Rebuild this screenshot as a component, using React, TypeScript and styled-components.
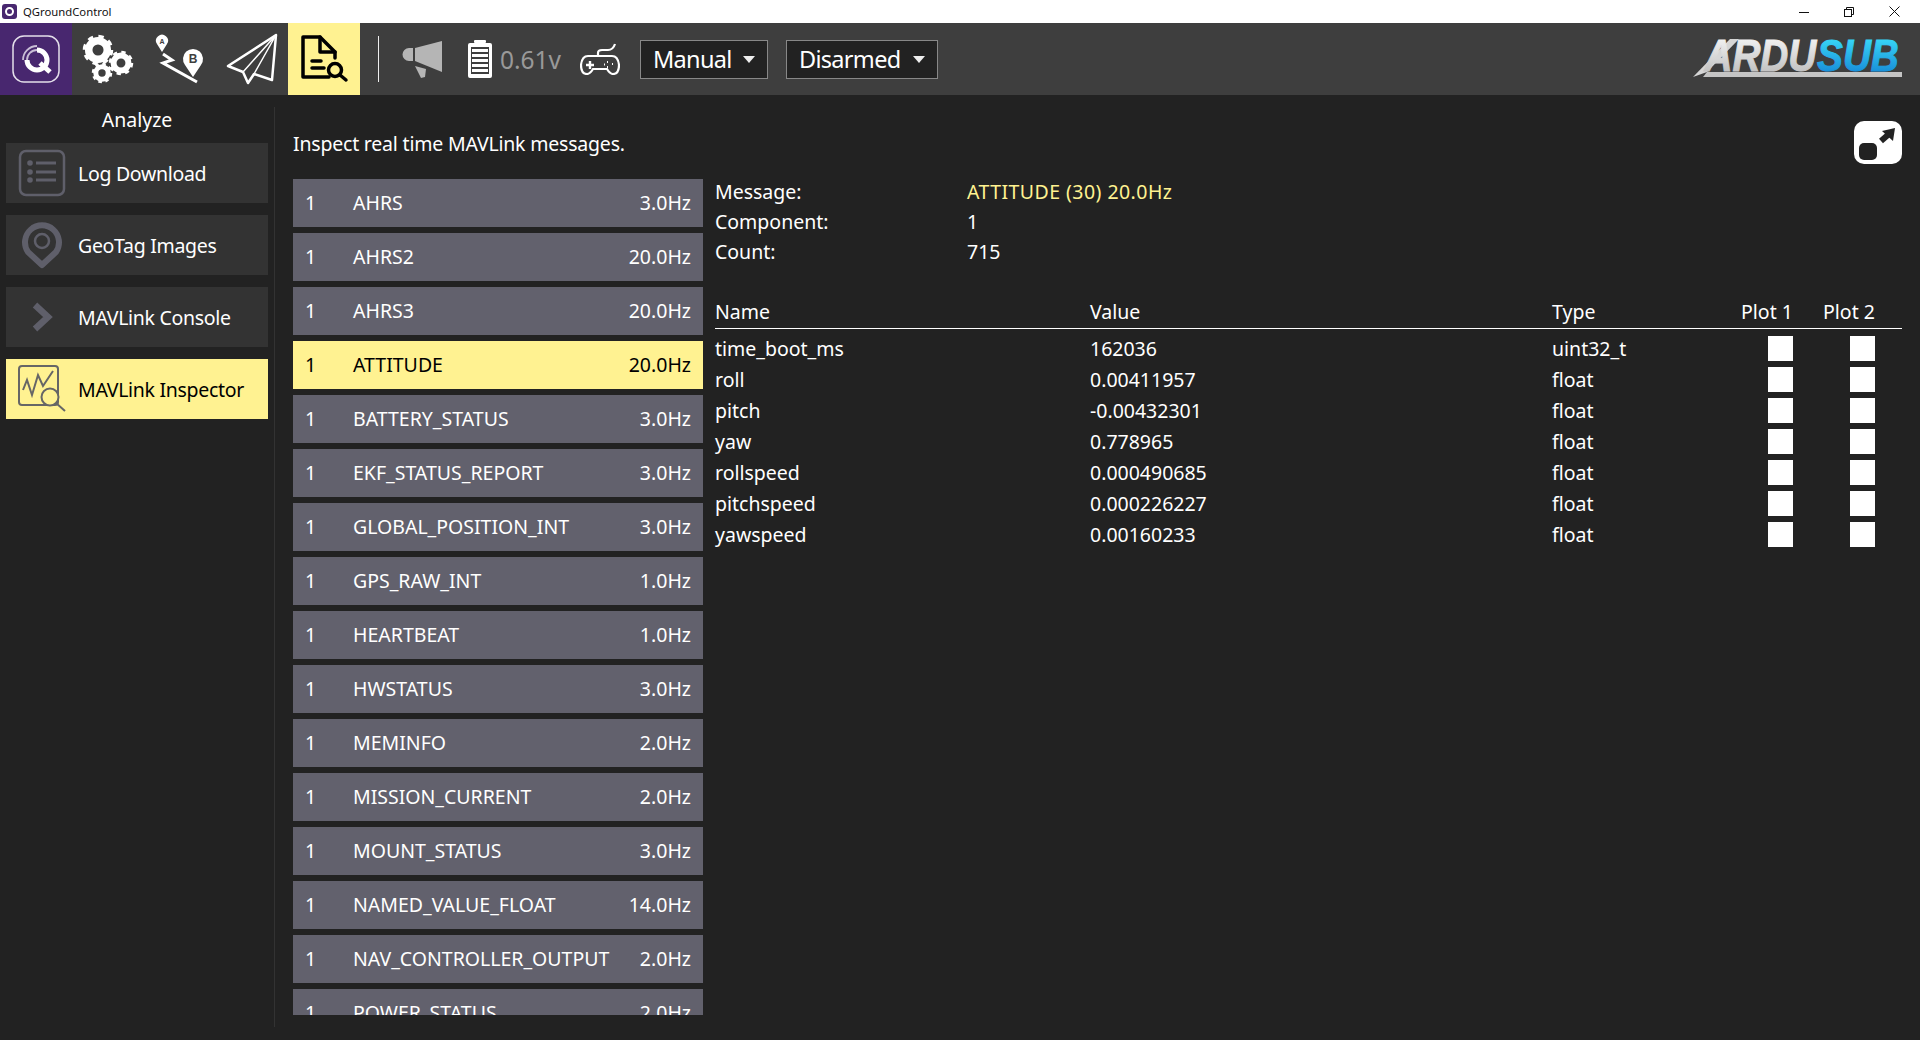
import React, { FC } from 'react'
import styled, { createGlobalStyle } from 'styled-components'

const Global = createGlobalStyle`
  html, body { margin: 0; height: 100%; background: #222; }
  body { font-family: "Noto Sans", "Open Sans", "Liberation Sans", sans-serif; font-size: 19.5px; color: #fff; overflow: hidden; }
  * { box-sizing: border-box; }
`

const Window = styled.div`
  display: flex;
  flex-direction: column;
  height: 100vh;
`

const TitleBar = styled.div`
  display: flex;
  align-items: center;
  flex: 0 0 23px;
  background: #fff;
  color: #111;
  font-size: 11.3px;
  padding-left: 2px;
`

const TitleText = styled.span`
  margin-left: 6px;
`

const WindowControls = styled.div`
  display: flex;
  align-items: center;
  margin-left: auto;
  padding-right: 20px;
  gap: 35px;
`

const Toolbar = styled.div`
  display: flex;
  align-items: center;
  flex: 0 0 72px;
  background: #3e3e3e;
`

const ToolButton = styled.div<{ $bg?: string }>`
  flex: 0 0 72px;
  height: 72px;
  background: ${(p) => p.$bg || 'transparent'};
  svg { display: block; }
`

const ToolDivider = styled.div`
  width: 1px;
  height: 46px;
  margin: 0 21px 0 18px;
  background: #eee;
`

const Voltage = styled.span`
  margin: 0 17px 0 8px;
  color: #999;
  font-size: 24.5px;
  width: 63px;
  white-space: nowrap;
`

const Battery = styled.svg`
  margin-left: 24px;
`

const Dropdown = styled.div<{ $width: number }>`
  display: flex;
  align-items: center;
  justify-content: space-between;
  width: ${(p) => p.$width}px;
  height: 39px;
  margin-left: ${(p) => (p.$width > 130 ? 18 : 20)}px;
  padding: 0 12px;
  background: #222;
  border: 1px solid #888;
  font-size: 23.5px;
  letter-spacing: -0.7px;
`

const Caret = styled.span`
  width: 0;
  height: 0;
  border-left: 6px solid transparent;
  border-right: 6px solid transparent;
  border-top: 7px solid #eee;
`

const Logo = styled.svg`
  margin-left: auto;
  margin-right: 18px;
`

const Body = styled.div`
  display: flex;
  flex: 1;
  min-height: 0;
`

const Sidebar = styled.div`
  display: flex;
  flex-direction: column;
  flex: 0 0 268px;
  padding-left: 6px;
  gap: 12px;
`

const SideTitle = styled.div`
  height: 36px;
  margin-top: 12px;
  text-align: center;
  line-height: 26px;
  margin-bottom: -12px;
`

const SideButton = styled.div<{ $active?: boolean }>`
  display: flex;
  align-items: center;
  height: 60px;
  background: ${(p) => (p.$active ? '#fff291' : '#333')};
  color: ${(p) => (p.$active ? '#000' : '#fff')};
  letter-spacing: -0.3px;
`

const SideIcon = styled.div`
  display: flex;
  justify-content: center;
  flex: 0 0 72px;
`

const VLine = styled.div`
  flex: 0 0 1px;
  margin: 12px 0 13px 6px;
  background: #333;
`

const Main = styled.div`
  display: flex;
  flex: 1;
  flex-direction: column;
  min-width: 0;
  padding: 26px 18px 25px 18px;
`

const Header = styled.div`
  display: flex;
  align-items: center;
  justify-content: space-between;
  flex: 0 0 43px;
  margin-bottom: 13px;
`

const HeaderText = styled.span`
  margin-top: 2px;
  letter-spacing: -0.2px;
`

const ExpandButton = styled.div`
  width: 48px;
  height: 43px;
  background: #fff;
  border-radius: 10px;
  svg { display: block; }
`

const Content = styled.div`
  display: flex;
  flex: 1;
  min-height: 0;
`

const MessageList = styled.div`
  display: flex;
  flex-direction: column;
  flex: 0 0 410px;
  gap: 6px;
  margin-top: 2px;
  overflow: hidden;
`

const MessageRow = styled.div<{ $active?: boolean }>`
  display: flex;
  align-items: center;
  flex: 0 0 48px;
  padding: 0 12px 1px;
  background: ${(p) => (p.$active ? '#fff291' : '#62616d')};
  color: ${(p) => (p.$active ? '#000' : '#fff')};
`

const CompId = styled.span`
  flex: 0 0 48px;
`

const MessageName = styled.span`
  flex: 1;
`

const Detail = styled.div`
  flex: 1;
  margin: -1px 0 0 12px;
`

const InfoGrid = styled.div`
  display: grid;
  grid-template-columns: 252px 1fr;
  grid-auto-rows: 30px;
  align-items: center;
`

const Highlight = styled.span`
  color: #fff291;
  letter-spacing: 0.45px;
`

const FieldGrid = styled.div`
  display: grid;
  grid-template-columns: 375px 462px 189px 82px 79px;
  margin-top: 30px;
`

const HeadRow = styled.div`
  display: grid;
  grid-template-columns: subgrid;
  grid-column: 1 / -1;
  align-items: center;
  height: 33px;
  padding-bottom: 2px;
  border-bottom: 1px solid #fff;
  margin-bottom: 6px;
`

const FieldRow = styled.div`
  display: grid;
  grid-template-columns: subgrid;
  grid-column: 1 / -1;
  align-items: center;
  height: 25px;
  margin-bottom: 6px;
`

const PlotBox = styled.div`
  width: 25px;
  height: 25px;
  margin-left: 27px;
  background: #fff;
`

const messages: [string, string][] = [
  ['AHRS', '3.0Hz'],
  ['AHRS2', '20.0Hz'],
  ['AHRS3', '20.0Hz'],
  ['ATTITUDE', '20.0Hz'],
  ['BATTERY_STATUS', '3.0Hz'],
  ['EKF_STATUS_REPORT', '3.0Hz'],
  ['GLOBAL_POSITION_INT', '3.0Hz'],
  ['GPS_RAW_INT', '1.0Hz'],
  ['HEARTBEAT', '1.0Hz'],
  ['HWSTATUS', '3.0Hz'],
  ['MEMINFO', '2.0Hz'],
  ['MISSION_CURRENT', '2.0Hz'],
  ['MOUNT_STATUS', '3.0Hz'],
  ['NAMED_VALUE_FLOAT', '14.0Hz'],
  ['NAV_CONTROLLER_OUTPUT', '2.0Hz'],
  ['POWER_STATUS', '2.0Hz'],
]

const fields: [string, string, string][] = [
  ['time_boot_ms', '162036', 'uint32_t'],
  ['roll', '0.00411957', 'float'],
  ['pitch', '-0.00432301', 'float'],
  ['yaw', '0.778965', 'float'],
  ['rollspeed', '0.000490685', 'float'],
  ['pitchspeed', '0.000226227', 'float'],
  ['yawspeed', '0.00160233', 'float'],
]

const Gear: FC<{ cx: number; cy: number; r: number }> = ({ cx, cy, r }) => {
  const teeth = 8
  const circ = 2 * Math.PI * (r - 2)
  return (
    <g fill="none" stroke="#fff">
      <circle cx={cx} cy={cy} r={r * 0.62} strokeWidth={r * 0.5} />
      <circle cx={cx} cy={cy} r={r - 2} strokeWidth={4.5} strokeDasharray={`${circ / teeth / 2} ${circ / teeth / 2}`} />
    </g>
  )
}

const QgcIcon = () => (
  <svg width="72" height="72" viewBox="0 0 72 72" fill="none">
    <rect x="13" y="13" width="46" height="46" rx="11" stroke="#e4dfea" strokeWidth="1.5" />
    <path d="M37 27 A10 10 0 1 1 27 37" stroke="#fff" strokeWidth="5" />
    <path d="M40 40 L50 49" stroke="#fff" strokeWidth="5" />
    <path d="M23 37 A14 14 0 0 1 37 23" stroke="#c9bed6" strokeWidth="1.8" />
    <path d="M27 37 A10 10 0 0 1 37 27" stroke="#c9bed6" strokeWidth="1.8" />
  </svg>
)

const GearsIcon = () => (
  <svg width="72" height="72" viewBox="0 0 72 72">
    <Gear cx={26} cy={27} r={15} />
    <Gear cx={49} cy={40} r={12} />
    <Gear cx={30} cy={50} r={10} />
  </svg>
)

const RouteIcon = () => (
  <svg width="72" height="72" viewBox="0 0 72 72">
    <path d="M18 29 L13 21 A6 6 0 1 1 23 21 Z" fill="#fff" />
    <text x="18" y="21" textAnchor="middle" fontSize="7" fontWeight="700" fill="#3e3e3e" fontFamily="Liberation Sans, sans-serif">A</text>
    <path d="M19 31 L28 37 L19 40 L53 59" fill="none" stroke="#fff" strokeWidth="3" />
    <path d="M49 54 L41 42 A10 10 0 1 1 57 42 Z" fill="#fff" />
    <text x="49" y="40" textAnchor="middle" fontSize="12" fontWeight="700" fill="#3e3e3e" fontFamily="Liberation Sans, sans-serif">B</text>
  </svg>
)

const PlaneIcon = () => (
  <svg width="72" height="72" viewBox="0 0 72 72" fill="none" stroke="#fff" strokeWidth="2.5" strokeLinejoin="round">
    <path d="M60 12 L12 43 L27 49 L32 60 L38 51 L56 57 Z" />
    <path d="M60 12 L27 49 M60 12 L38 51" strokeWidth="1.5" />
  </svg>
)

const AnalyzeIcon = () => (
  <svg width="72" height="72" viewBox="0 0 72 72" fill="none" stroke="#000" strokeWidth="3.5" strokeLinejoin="round" strokeLinecap="round">
    <path d="M41 54 H15 V14 H32 L47 29 V35" />
    <path d="M32 14 V29 H47" />
    <path d="M24 38 H33 M24 45 H36" />
    <circle cx="47" cy="47" r="6.5" />
    <path d="M52 52 L58 57" />
  </svg>
)

const MegaphoneIcon = () => (
  <svg width="44" height="44" viewBox="0 0 44 44" fill="#b5b5b5">
    <path d="M9 11 A6.5 6.5 0 0 0 9 24 H13 V11 Z" />
    <path d="M15 11 L42 4 V35 L15 24 Z" />
    <path d="M15 29 L26 32 L25 40 L21 41 Z" />
  </svg>
)

const BatteryIcon = () => (
  <Battery width="24" height="38" viewBox="0 0 24 38" fill="#fff">
    <rect x="6" y="0" width="12" height="3" rx="1" />
    <path fillRule="evenodd" d="M2 3 H22 Q24 3 24 5 V36 Q24 38 22 38 H2 Q0 38 0 36 V5 Q0 3 2 3 Z M3 7 V34 H21 V7 Z" />
    <rect x="4" y="9" width="16" height="3" />
    <rect x="4" y="14" width="16" height="3" />
    <rect x="4" y="19" width="16" height="3" />
    <rect x="4" y="24" width="16" height="3" />
    <rect x="4" y="29" width="16" height="3" />
  </Battery>
)

const JoystickIcon = () => (
  <svg width="40" height="32" viewBox="0 0 40 32" fill="none" stroke="#fff" strokeWidth="2.2">
    <path d="M8 13 H32 Q38 13 39 22 Q39 31 33 31 Q30 31 27 26 H13 Q10 31 7 31 Q1 31 1 22 Q2 13 8 13 Z" />
    <path d="M18 13 V10 Q18 7 22 7 H28 Q33 7 35 1" />
    <path d="M6 22 H14 M10 18 V26" strokeWidth="2.4" />
    <path d="M27 19 H28 M32 21 H33 M27 24 H28 M24 21.5 H25" strokeWidth="2" />
  </svg>
)

const ArduSubLogo = () => (
  <Logo width="209" height="56" viewBox="0 0 209 56">
    <defs>
      <linearGradient id="ardu" x1="0" y1="0" x2="0" y2="1">
        <stop offset="0.15" stopColor="#f2f2f2" />
        <stop offset="0.8" stopColor="#c4c4c4" />
      </linearGradient>
      <linearGradient id="sub" x1="0" y1="0" x2="0" y2="1">
        <stop offset="0.15" stopColor="#38d8f8" />
        <stop offset="0.8" stopColor="#1a92da" />
      </linearGradient>
    </defs>
    <path d="M0 46 L37 8 H46 L14 41 Z" fill="#d6d6d6" />
    <path d="M14 41 H209 V46 H10 Z" fill="#c4c4c4" />
    <g transform="scale(0.88 1)" fontFamily="Liberation Sans, sans-serif" fontWeight="700" fontStyle="italic" fontSize="44" strokeWidth="1">
      <text x="13" y="40" fill="url(#ardu)" stroke="url(#ardu)">ARDU</text>
      <text x="141" y="40" fill="url(#sub)" stroke="url(#sub)">SUB</text>
    </g>
  </Logo>
)

const LogDownloadIcon = () => (
  <svg width="48" height="48" viewBox="0 0 48 48" fill="none" stroke="#5f5f6a" strokeWidth="2.5">
    <rect x="2" y="2" width="44" height="44" rx="6" />
    <path d="M18 14 H38 M18 23 H38 M18 31 H38" strokeWidth="3" />
    <g fill="#5f5f6a" stroke="none">
      <circle cx="12" cy="14" r="2.8" />
      <circle cx="12" cy="23" r="2.8" />
      <circle cx="12" cy="31" r="2.8" />
    </g>
  </svg>
)

const GeoTagIcon = () => (
  <svg width="48" height="48" viewBox="0 0 48 48" fill="none" stroke="#5f5f6a">
    <path d="M24 44 L10 31 A17 17 0 1 1 38 31 Z" strokeWidth="6" strokeLinejoin="round" />
    <circle cx="24" cy="20" r="7" strokeWidth="2.5" />
  </svg>
)

const ConsoleIcon = () => (
  <svg width="48" height="48" viewBox="0 0 48 48" fill="none" stroke="#5f5f6a">
    <path d="M17 12 L30 24 L17 36" strokeWidth="6.5" />
  </svg>
)

const InspectorIcon = () => (
  <svg width="48" height="48" viewBox="0 0 48 48" fill="none" stroke="#666">
    <rect x="1" y="1" width="39" height="39" rx="3" strokeWidth="2" />
    <path d="M5 25 L9 15 L14 30 L20 10 L25 21 L35 6" strokeWidth="2" />
    <circle cx="32" cy="32" r="8.5" strokeWidth="2" fill="#fff291" />
    <path d="M38 38 L47 46" strokeWidth="2" />
  </svg>
)

const ExpandIcon = () => (
  <svg width="48" height="43" viewBox="0 0 48 43" fill="#222">
    <rect x="5" y="22" width="18" height="17" rx="5" />
    <path d="M41 7 L28 10 L39 20 Z" />
    <path d="M27 20 L35 13" stroke="#222" strokeWidth="6" />
  </svg>
)

const App: FC = () => (
  <Window>
    <Global />
    <TitleBar>
      <svg width="15" height="15" viewBox="0 0 15 15">
        <rect width="15" height="15" rx="3" fill="#48276f" />
        <circle cx="7.5" cy="7.5" r="3.5" fill="none" stroke="#fff" strokeWidth="2" />
      </svg>
      <TitleText>QGroundControl</TitleText>
      <WindowControls>
        <svg width="10" height="10" viewBox="0 0 10 10" stroke="#111"><path d="M0 5.5 H10" /></svg>
        <svg width="10" height="10" viewBox="0 0 10 10" fill="none" stroke="#111"><rect x="0.5" y="2.5" width="7" height="7" /><path d="M2.5 2.5 V0.5 H9.5 V7.5 H7.5" /></svg>
        <svg width="11" height="11" viewBox="0 0 11 11" stroke="#111"><path d="M0.5 0.5 L10.5 10.5 M10.5 0.5 L0.5 10.5" /></svg>
      </WindowControls>
    </TitleBar>
    <Toolbar>
      <ToolButton $bg="#48276f"><QgcIcon /></ToolButton>
      <ToolButton><GearsIcon /></ToolButton>
      <ToolButton><RouteIcon /></ToolButton>
      <ToolButton><PlaneIcon /></ToolButton>
      <ToolButton $bg="#fff291"><AnalyzeIcon /></ToolButton>
      <ToolDivider />
      <MegaphoneIcon />
      <BatteryIcon />
      <Voltage>0.61v</Voltage>
      <JoystickIcon />
      <Dropdown $width={128}>Manual<Caret /></Dropdown>
      <Dropdown $width={152}>Disarmed<Caret /></Dropdown>
      <ArduSubLogo />
    </Toolbar>
    <Body>
      <Sidebar>
        <SideTitle>Analyze</SideTitle>
        <SideButton><SideIcon><LogDownloadIcon /></SideIcon>Log Download</SideButton>
        <SideButton><SideIcon><GeoTagIcon /></SideIcon>GeoTag Images</SideButton>
        <SideButton><SideIcon><ConsoleIcon /></SideIcon>MAVLink Console</SideButton>
        <SideButton $active><SideIcon><InspectorIcon /></SideIcon>MAVLink Inspector</SideButton>
      </Sidebar>
      <VLine />
      <Main>
        <Header>
          <HeaderText>Inspect real time MAVLink messages.</HeaderText>
          <ExpandButton><ExpandIcon /></ExpandButton>
        </Header>
        <Content>
          <MessageList>
            {messages.map(([name, rate]) => (
              <MessageRow key={name} $active={name === 'ATTITUDE'}>
                <CompId>1</CompId>
                <MessageName>{name}</MessageName>
                <span>{rate}</span>
              </MessageRow>
            ))}
          </MessageList>
          <Detail>
            <InfoGrid>
              <span>Message:</span>
              <Highlight>ATTITUDE (30) 20.0Hz</Highlight>
              <span>Component:</span>
              <span>1</span>
              <span>Count:</span>
              <span>715</span>
            </InfoGrid>
            <FieldGrid>
              <HeadRow>
                <span>Name</span>
                <span>Value</span>
                <span>Type</span>
                <span>Plot 1</span>
                <span>Plot 2</span>
              </HeadRow>
              {fields.map(([name, value, type]) => (
                <FieldRow key={name}>
                  <span>{name}</span>
                  <span>{value}</span>
                  <span>{type}</span>
                  <PlotBox />
                  <PlotBox />
                </FieldRow>
              ))}
            </FieldGrid>
          </Detail>
        </Content>
      </Main>
    </Body>
  </Window>
)

export default App
